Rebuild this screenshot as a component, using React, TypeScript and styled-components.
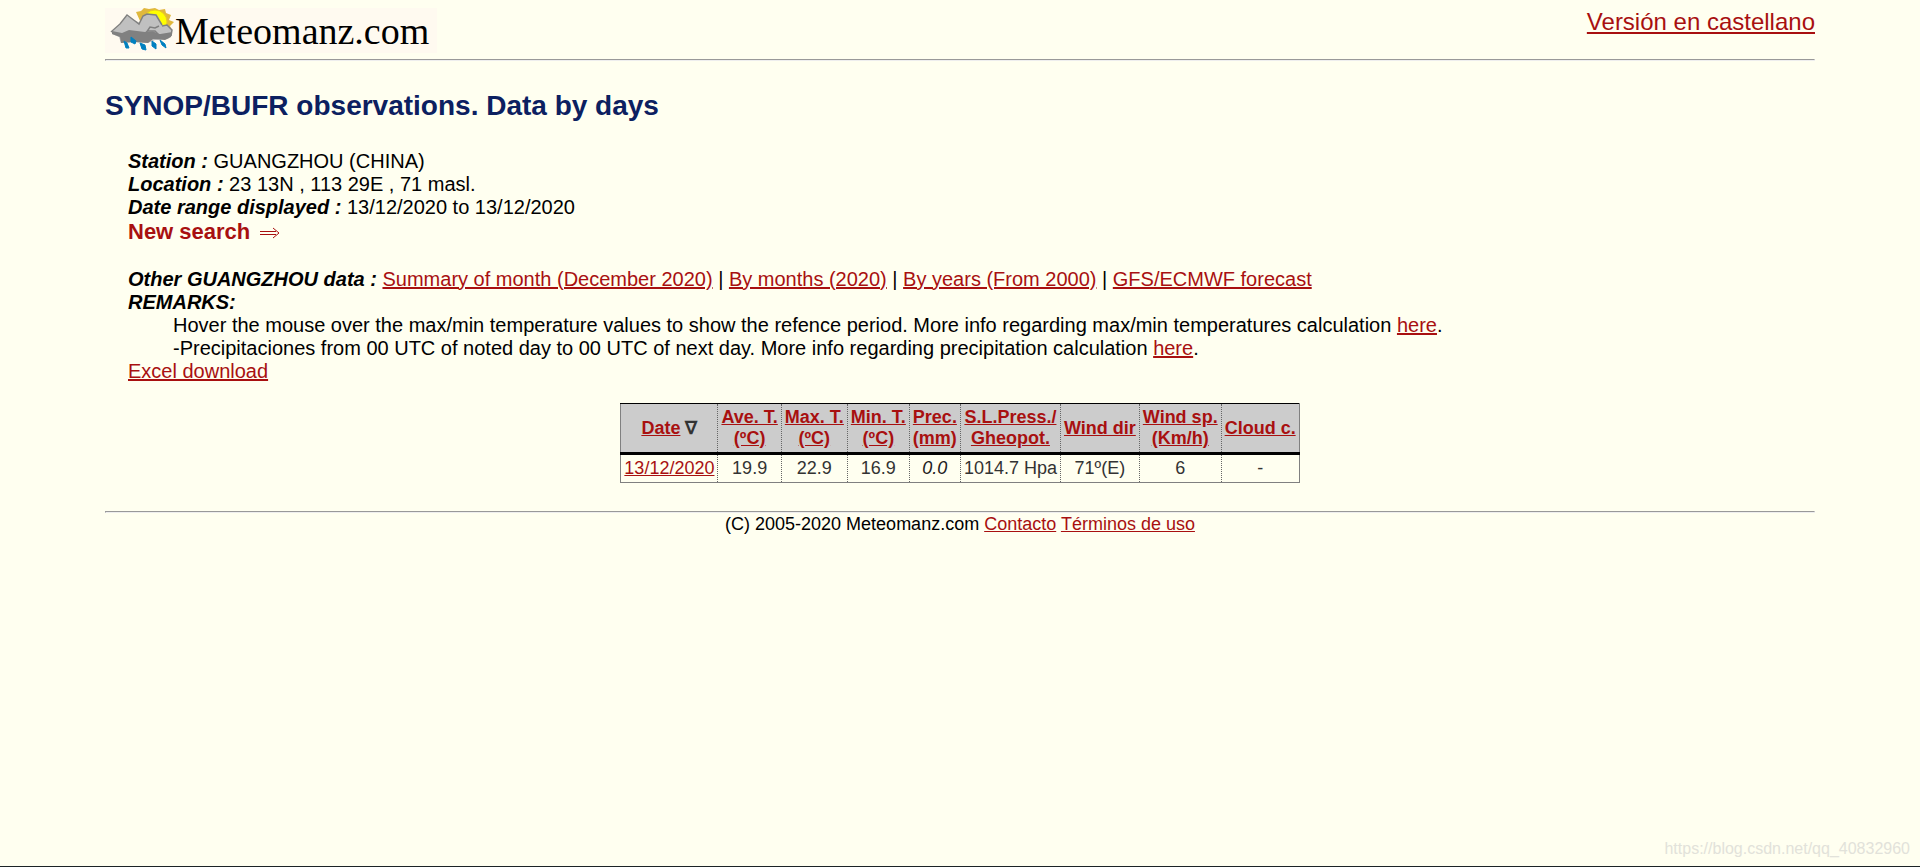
import React from "react";
import styled, { createGlobalStyle } from "styled-components";

const GlobalStyle = createGlobalStyle`
  * {
    box-sizing: border-box;
  }

  body {
    margin: 0;
    background: #fffff0;
    color: #000;
    font-family: "Liberation Sans", Arial, sans-serif;
    font-size: 20px;
    line-height: 23px;
  }

  a {
    color: #a81010;
  }
`;

const Page = styled.div`
  display: flex;
  flex-direction: column;
  min-height: 100vh;
  padding: 8px 10px 0;
  border-bottom: 1px solid #1c2326;
`;

const Content = styled.div`
  width: 90%;
  margin: 0 auto;
`;

const Header = styled.header`
  display: flex;
  align-items: flex-start;
  justify-content: space-between;
`;

const Brand = styled.div`
  display: flex;
  align-items: center;
  width: 332px;
  height: 45px;
  background: #fffaf0;
`;

const BrandName = styled.span`
  font-family: "Liberation Serif", "Times New Roman", serif;
  font-size: 38px;
  line-height: 44px;
`;

const LanguageLink = styled.a`
  font-size: 24px;
  line-height: 28px;
`;

const Rule = styled.hr<{ $top: number }>`
  margin: ${(p) => p.$top}px 0 0;
  border: 1px solid;
  border-color: #999 #eee #eee #999;
`;

const Title = styled.h1`
  margin: 29px 0 28px;
  color: #0c2060;
  font-size: 28px;
  line-height: 32px;
`;

const Details = styled.section`
  padding-left: 23px;
`;

const Line = styled.div``;

const Label = styled.b`
  font-style: italic;
`;

const SearchLink = styled.a`
  display: block;
  width: fit-content;
  font-size: 22px;
  font-weight: bold;
  line-height: 26px;
  text-decoration: none;
`;

const Arrow = styled.svg`
  width: 20px;
  height: 12px;
  margin-left: 10px;
`;

const OtherData = styled.div`
  margin-top: 23px;
`;

const Remarks = styled.div`
  padding-left: 45px;
`;

const DataTable = styled.table`
  margin: 20px auto 0;
  border-collapse: collapse;
  border: 1px solid #808080;
  border-top-color: #000;
  color: #333;
  font-size: 18px;
  line-height: 21px;
  text-align: center;
`;

const HeadCell = styled.th`
  padding: 3px;
  border-right: 1px dotted #666;
  border-bottom: 3px solid #000;
  background: #ccc;

  &:last-child {
    border-right: 1px solid #808080;
  }
`;

const Cell = styled.td<{ $italic?: boolean }>`
  padding: 3px;
  border-right: 1px dotted #666;
  color: ${(p) => (p.$italic ? "#222" : "#333")};
  font-style: ${(p) => (p.$italic ? "italic" : "normal")};

  &:last-child {
    border-right: 1px solid #808080;
  }
`;

const SortMark = styled.span`
  font-weight: bold;
`;

const Footer = styled.footer`
  font-size: 18px;
  line-height: 22px;
  text-align: center;
`;

const Watermark = styled.div`
  margin: auto 0 7px;
  color: #e2e2da;
  font-size: 16px;
  line-height: 20px;
  text-align: right;
`;

const otherPages = [
  "Summary of month (December 2020)",
  "By months (2020)",
  "By years (From 2000)",
  "GFS/ECMWF forecast",
];

const columns = [
  ["Date"],
  ["Ave. T.", "(ºC)"],
  ["Max. T.", "(ºC)"],
  ["Min. T.", "(ºC)"],
  ["Prec.", "(mm)"],
  ["S.L.Press./", "Gheopot."],
  ["Wind dir"],
  ["Wind sp.", "(Km/h)"],
  ["Cloud c."],
];

function WeatherLogo() {
  return (
    <svg width="70" height="45" viewBox="0 0 70 45" aria-hidden="true">
      <path d="M31 4L36 3 39 0 44 1 50 0 54 2 60 1 61 5 66 7 64 12 69 14 65 18 67 23 62 28 40 24Z" fill="#e0b83c" />
      <circle cx="50" cy="14" r="12" fill="#ffff00" stroke="#e8cc20" />
      <path d="M7 24L15 17 22 8 29 12 35 15 38 8 42 6 52 7 57 17 64 18 67 22 67 26 63 31 50 32 43 35 30 34 16 35 14 29 7 26Z" fill="#c0c0c0" />
      <path d="M7 23L17 25 24 22 40 24 45 22 54 26 67 24 66 29 60 32 48 31 43 35 29 34 16 35 15 29 7 26Z" fill="#808080" />
      <path d="M42 24L45 19 50 20 54 18 60 19 61 17 67 22 66 26 55 26 50 23Z" fill="#c0c0c0" />
      <path d="M6 24L15 16 22 7 30 13 34 16 38 8 42 6 51 7 57 17 M41 25L45 19 50 20 54 18 M57 18L62 17 67 22 66 28 M43 23L50 23 54 27 66 25" fill="none" stroke="#808080" strokeWidth="1.5" />
      <path d="M19 33L22 35 24 40 21 40ZM26 29L31 33 30 36 26 34ZM35 35L40 37 41 42 37 41ZM47 33L51 36 51 41 47 38ZM55 32L60 36 61 40 57 37Z" fill="#0080c0" stroke="#0080c0" />
    </svg>
  );
}

export default function App() {
  return (
    <>
      <GlobalStyle />
      <Page>
        <Content>
          <Header>
            <Brand>
              <WeatherLogo />
              <BrandName>Meteomanz.com</BrandName>
            </Brand>
            <LanguageLink href="#es">Versión en castellano</LanguageLink>
          </Header>
          <Rule $top={6} />
          <Title>SYNOP/BUFR observations. Data by days</Title>
          <Details>
            <Line><Label>Station :</Label> GUANGZHOU (CHINA)</Line>
            <Line><Label>Location :</Label> 23 13N , 113 29E , 71 masl.</Line>
            <Line><Label>Date range displayed :</Label> 13/12/2020 to 13/12/2020</Line>
            <SearchLink href="#search">
              New search
              <Arrow viewBox="0 0 20 12" aria-hidden="true">
                <path d="M0 4.5H16M0 7.5H16M13 1L19 6L13 11" fill="none" stroke="currentColor" />
              </Arrow>
            </SearchLink>
            <OtherData>
              <Label>Other GUANGZHOU data :</Label>{" "}
              {otherPages.map((page, i) => (
                <React.Fragment key={page}>
                  {i > 0 && " | "}
                  <a href="#data">{page}</a>
                </React.Fragment>
              ))}
            </OtherData>
            <Label>REMARKS:</Label>
            <Remarks>
              <Line>
                Hover the mouse over the max/min temperature values to show the refence period. More info
                regarding max/min temperatures calculation <a href="#temperature">here</a>.
              </Line>
              <Line>
                -Precipitaciones from 00 UTC of noted day to 00 UTC of next day. More info regarding
                precipitation calculation <a href="#precipitation">here</a>.
              </Line>
            </Remarks>
            <a href="#excel">Excel download</a>
          </Details>
          <DataTable>
            <thead>
              <tr>
                {columns.map((lines, i) => (
                  <HeadCell key={i} scope="col">
                    <a href="#sort">
                      {lines[0]}
                      {lines[1] && <><br />{lines[1]}</>}
                    </a>
                    {i === 0 && <SortMark> ∇</SortMark>}
                  </HeadCell>
                ))}
              </tr>
            </thead>
            <tbody>
              <tr>
                <Cell><a href="#day">13/12/2020</a></Cell>
                <Cell>19.9</Cell>
                <Cell>22.9</Cell>
                <Cell>16.9</Cell>
                <Cell $italic>0.0</Cell>
                <Cell>1014.7 Hpa</Cell>
                <Cell>71º(E)</Cell>
                <Cell>6</Cell>
                <Cell>-</Cell>
              </tr>
            </tbody>
          </DataTable>
          <Rule $top={28} />
          <Footer>
            (C) 2005-2020 Meteomanz.com <a href="#contact">Contacto</a> <a href="#terms">Términos de uso</a>
          </Footer>
        </Content>
        <Watermark>https://blog.csdn.net/qq_40832960</Watermark>
      </Page>
    </>
  );
}
